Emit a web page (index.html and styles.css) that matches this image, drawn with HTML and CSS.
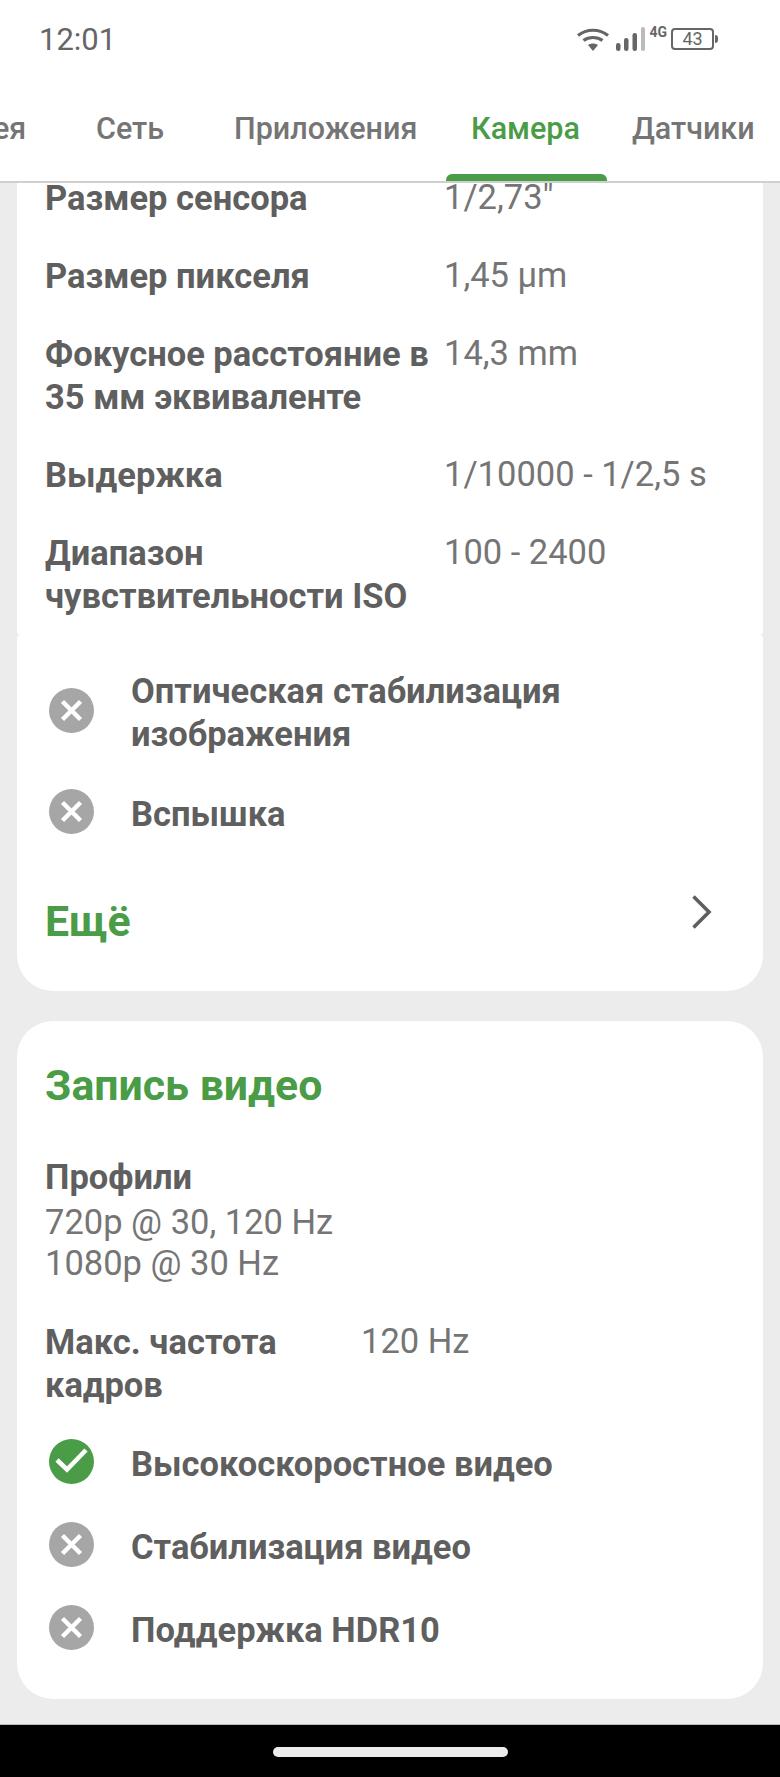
FILE: index.html
```html
<!DOCTYPE html>
<html lang="ru">
<head>
<meta charset="utf-8">
<title>Камера</title>
<link rel="stylesheet" href="styles.css">
</head>
<body>
<div class="screen">
  <header class="header">
    <div class="status">
      <span class="time">12:01</span>
      <div class="status-icons">
        <svg class="wifi" width="34" height="26" viewBox="0 0 34 26"><g fill="none" stroke="#666" stroke-width="3.2"><path d="M2 9.5C10.500 2.500 23.500 2.500 32 9.500"/><path d="M7.500 14.500C13 10.500 21 10.500 26.500 14.500"/></g><path d="M12 19C15 17 19 17 22 19L17 25Z" fill="#666"/></svg>
        <svg class="signal" width="30" height="30" viewBox="0 0 30 30"><rect x="0" y="19" width="4.500" height="8" rx="2.200" fill="#666"/><rect x="8" y="14" width="4.500" height="13" rx="2.200" fill="#666"/><rect x="16.500" y="9" width="4.500" height="18" rx="2.200" fill="#666"/><rect x="25" y="3" width="4" height="24" rx="2" fill="#bbb"/></svg>
        <span class="net">4G</span>
        <div class="battery"><span class="battery-level">43</span></div>
        <span class="battery-tip"></span>
      </div>
    </div>
    <nav class="tabs">
      <span class="tab tab-cut">ея</span>
      <span class="tab tab-net">Сеть</span>
      <span class="tab tab-apps">Приложения</span>
      <span class="tab tab-active">Камера</span>
      <span class="tab tab-sensors">Датчики</span>
    </nav>
  </header>
  <main class="content">
    <section class="card card-specs">
      <div class="row"><div class="label">Размер сенсора</div><div class="value">1/2,73"</div></div>
      <div class="row"><div class="label">Размер пикселя</div><div class="value">1,45 µm</div></div>
      <div class="row"><div class="label">Фокусное расстояние в 35 мм эквиваленте</div><div class="value">14,3 mm</div></div>
      <div class="row"><div class="label">Выдержка</div><div class="value">1/10000 - 1/2,5 s</div></div>
      <div class="row"><div class="label">Диапазон чувствительности ISO</div><div class="value">100 - 2400</div></div>
    </section>
    <section class="card card-features">
      <div class="feature">
        <svg class="icon" viewBox="0 0 45 45"><circle cx="22.500" cy="22.500" r="22.500" fill="#a6a6a6"/><path d="M13.500 13.500L31.500 31.500M31.500 13.500L13.500 31.500" stroke="#fff" stroke-width="4.500" fill="none"/></svg>
        <div class="feature-text">Оптическая стабилизация изображения</div>
      </div>
      <div class="feature">
        <svg class="icon" viewBox="0 0 45 45"><circle cx="22.500" cy="22.500" r="22.500" fill="#a6a6a6"/><path d="M13.500 13.500L31.500 31.500M31.500 13.500L13.500 31.500" stroke="#fff" stroke-width="4.500" fill="none"/></svg>
        <div class="feature-text">Вспышка</div>
      </div>
      <div class="more">
        <span class="more-text">Ещё</span>
        <svg class="chevron" width="22" height="36" viewBox="0 0 22 36"><path d="M2.500 2.500L18 18L2.500 33.500" fill="none" stroke="#5f5f5f" stroke-width="3.600"/></svg>
      </div>
    </section>
    <section class="card card-video">
      <h2 class="title">Запись видео</h2>
      <div class="label">Профили</div>
      <div class="value profiles">720p @ 30, 120 Hz<br>1080p @ 30 Hz</div>
      <div class="row row-video"><div class="label">Макс. частота кадров</div><div class="value">120 Hz</div></div>
      <div class="feature">
        <svg class="icon" viewBox="0 0 45 45"><circle cx="22.500" cy="22.500" r="22.500" fill="#4a9c47"/><path d="M8 21L18 30.500L37 11" stroke="#fff" stroke-width="4.500" fill="none"/></svg>
        <div class="feature-text">Высокоскоростное видео</div>
      </div>
      <div class="feature">
        <svg class="icon" viewBox="0 0 45 45"><circle cx="22.500" cy="22.500" r="22.500" fill="#a6a6a6"/><path d="M13.500 13.500L31.500 31.500M31.500 13.500L13.500 31.500" stroke="#fff" stroke-width="4.500" fill="none"/></svg>
        <div class="feature-text">Стабилизация видео</div>
      </div>
      <div class="feature">
        <svg class="icon" viewBox="0 0 45 45"><circle cx="22.500" cy="22.500" r="22.500" fill="#a6a6a6"/><path d="M13.500 13.500L31.500 31.500M31.500 13.500L13.500 31.500" stroke="#fff" stroke-width="4.500" fill="none"/></svg>
        <div class="feature-text">Поддержка HDR10</div>
      </div>
    </section>
  </main>
  <footer class="navbar"><span class="handle"></span></footer>
</div>
</body>
</html>
```
FILE: styles.css
```css
* { box-sizing: border-box; }
html, body { margin: 0; padding: 0; }
body { width: 780px; height: 1777px; overflow: hidden; font-family: Roboto, "Noto Sans", sans-serif; background: #ececec; }
.screen { display: flex; flex-direction: column; height: 1777px; }
.header { flex: none; height: 183px; background: #fff; border-bottom: 2px solid #cfcfcf; position: relative; z-index: 2; display: flex; flex-direction: column; }
.status { height: 78px; display: flex; align-items: center; justify-content: space-between; padding: 0 62px 0 39px; }
.time { font-size: 31px; color: #666; }
.status-icons { display: flex; align-items: center; }
.wifi { margin-right: 6px; }
.signal { margin-right: 1px; }
.net { font-size: 14px; font-weight: 700; color: #666; align-self: flex-start; margin: 0 4px 0 2px; line-height: 16px; }
.battery { width: 43px; height: 22px; border: 2.500px solid #666; border-radius: 4px; display: flex; align-items: center; justify-content: center; }
.battery-level { font-size: 18px; color: #666; line-height: 1; }
.battery-tip { width: 3px; height: 8px; background: #666; border-radius: 0 3px 3px 0; margin-left: 1px; }
.tabs { flex: 1; position: relative; display: flex; align-items: center; padding: 0 0 2px 0; font-size: 30.500px; font-weight: 500; color: #757575; white-space: nowrap; }
.tab { display: block; }
.tab-cut { margin-left: -7px; width: 103px; }
.tab-net { width: 138px; }
.tab-apps { width: 237px; }
.tab-active { color: #4a9c47; width: 161px; }
.tab-active::after { content: ""; position: absolute; left: 446px; bottom: 0; width: 161px; height: 7px; background: #4a9c47; border-radius: 6px 6px 0 0; }
.content { flex: 1; min-height: 0; overflow: hidden; padding: 0 17px; }
.card { background: #fff; padding: 0 28px; }
.card-specs { margin-top: -6px; height: 458px; border-radius: 0 0 4px 4px; }
.card-features { height: 356px; border-radius: 4px 4px 36px 36px; padding-top: 35px; }
.card-video { margin-top: 30px; height: 678px; border-radius: 36px; padding-top: 40px; }
.row { display: flex; margin-bottom: 35px; }
.label { font-size: 34.500px; line-height: 43px; font-weight: 700; color: #5f5f5f; }
.row .label { width: 399px; flex: none; padding-right: 10px; }
.value { font-size: 34.500px; line-height: 41px; color: #757575; }
.row .value { line-height: 41px; }
.title { margin: 0 0 47px; font-size: 42.800px; line-height: 48px; font-weight: 700; color: #4a9c47; }
.profiles { margin: 3px 0 37px; }
.row-video .label { width: 316px; padding-right: 40px; }
.row-video { margin-bottom: 36px; }
.feature { display: flex; align-items: center; margin-bottom: 37px; }
.card-video .feature { margin-bottom: 40px; }
.icon { width: 45px; height: 45px; flex: none; margin: -6px 37px 0 4px; }
.feature-text { font-size: 34.500px; line-height: 43px; font-weight: 700; color: #5f5f5f; }
.more { display: flex; justify-content: space-between; align-items: center; padding-right: 22px; margin-top: 61px; }
.more-text { font-size: 42.800px; line-height: 48px; font-weight: 700; color: #4a9c47; }
.chevron { margin-top: -18px; }
.navbar { flex: none; height: 53px; background: #000; display: flex; justify-content: center; padding-top: 22px; border-top: 1px solid #bbb; }
.handle { width: 235px; height: 10px; background: #ececec; border-radius: 5px; }
```
